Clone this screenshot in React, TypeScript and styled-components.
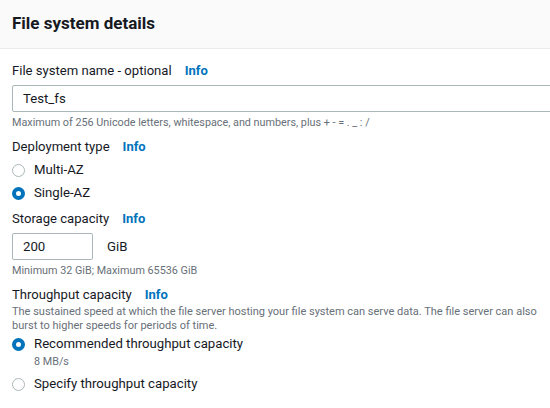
import React from "react";
import styled, { createGlobalStyle } from "styled-components";

const Global = createGlobalStyle`
  html, body { margin: 0; padding: 0; background: #fff; }
  body { font-family: Roboto, "Noto Sans", sans-serif; color: #16191f; width: 550px; overflow: hidden; }
  * { box-sizing: border-box; }
`;

const Header = styled.div`
  height: 49px;
  background: #fafafa;
  border-bottom: 1px solid #eaeded;
  padding: 0 12px;
  display: flex;
  align-items: center;
`;

const Title = styled.h2`
  margin: 0;
  margin-top: -3px;
  font-size: 17px;
  font-weight: 700;
  letter-spacing: 0;
`;

const Body = styled.div`
  padding: 12px 0 0 12px;
  display: flex;
  flex-direction: column;
`;

const Field = styled.div<{ $mt?: number }>`
  display: flex;
  flex-direction: column;
  margin-top: ${(p) => p.$mt ?? 0}px;
`;

const Label = styled.div`
  font-size: 13.1px;
  line-height: 20px;
  display: flex;
  gap: 13px;
`;

const Info = styled.a`
  color: #0073bb;
  font-weight: 700;
  font-size: 13px;
  text-decoration: none;
`;

const TextInput = styled.div<{ $w?: string }>`
  width: ${(p) => p.$w ?? "560px"};
  height: 27px;
  border: 1px solid #aab7b8;
  border-radius: 2px;
  padding: 0 10px;
  font-size: 13.2px;
  display: flex;
  align-items: center;
  margin-top: 4px;
`;

const Hint = styled.div`
  font-size: 10.8px;
  color: #687078;
  line-height: 16px;
  margin-top: 3px;
`;

const Desc = styled.div`
  font-size: 11px;
  color: #687078;
  line-height: 14px;
  width: 530px;
`;

const Row = styled.div`
  display: flex;
  align-items: center;
`;

const Unit = styled.span`
  font-size: 13.2px;
  margin-left: 14px;
  margin-top: 4px;
`;

const RadioRow = styled.div<{ $mt?: number }>`
  display: flex;
  align-items: flex-start;
  gap: 9px;
  margin-top: ${(p) => p.$mt ?? 0}px;
`;

const RadioCircle = styled.span<{ $on?: boolean }>`
  width: 13px;
  height: 13px;
  border-radius: 50%;
  flex: none;
  margin-top: 4px;
  background: #fff;
  border: ${(p) => (p.$on ? "4px solid #0073bb" : "1px solid #aab7b8")};
`;

const RadioText = styled.div`
  display: flex;
  flex-direction: column;
  font-size: 13.2px;
  line-height: 20px;
`;

const Sub = styled.span`
  font-size: 10.8px;
  color: #687078;
  line-height: 12px;
  margin-top: 2px;
`;

export default function App() {
  return (
    <>
      <Global />
      <Header>
        <Title>File system details</Title>
      </Header>
      <Body>
        <Field>
          <Label>
            File system name - optional <Info>Info</Info>
          </Label>
          <TextInput>Test_fs</TextInput>
          <Hint>Maximum of 256 Unicode letters, whitespace, and numbers, plus + - = . _ : /</Hint>
        </Field>
        <Field $mt={6}>
          <Label>
            Deployment type <Info>Info</Info>
          </Label>
          <RadioRow $mt={3}>
            <RadioCircle />
            <RadioText>Multi-AZ</RadioText>
          </RadioRow>
          <RadioRow $mt={3}>
            <RadioCircle $on />
            <RadioText>Single-AZ</RadioText>
          </RadioRow>
        </Field>
        <Field $mt={6}>
          <Label>
            Storage capacity <Info>Info</Info>
          </Label>
          <Row>
            <TextInput $w="81px">200</TextInput>
            <Unit>GiB</Unit>
          </Row>
          <Hint>Minimum 32 GiB; Maximum 65536 GiB</Hint>
        </Field>
        <Field $mt={6}>
          <Label>
            Throughput capacity <Info>Info</Info>
          </Label>
          <Desc>
            The sustained speed at which the file server hosting your file system can serve data. The file server can also burst to higher speeds for periods of time.
          </Desc>
          <RadioRow $mt={1}>
            <RadioCircle $on />
            <RadioText>
              Recommended throughput capacity
              <Sub>8 MB/s</Sub>
            </RadioText>
          </RadioRow>
          <RadioRow $mt={6}>
            <RadioCircle />
            <RadioText>Specify throughput capacity</RadioText>
          </RadioRow>
        </Field>
      </Body>
    </>
  );
}
